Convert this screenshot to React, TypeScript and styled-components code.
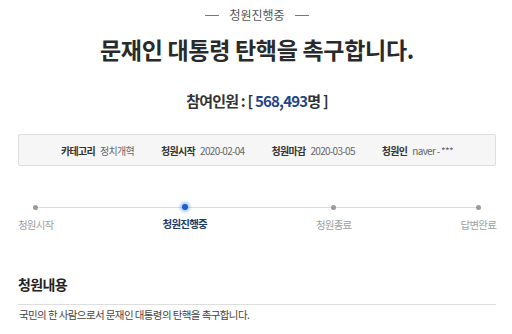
import * as React from 'react';
import styled, { createGlobalStyle } from 'styled-components';

const GlobalStyle = createGlobalStyle`
  html, body {
    margin: 0;
    padding: 0;
    background: #fff;
  }
  body {
    font-family: "Noto Sans CJK KR", "Noto Sans", sans-serif;
    color: #333;
  }
`;

const Page = styled.div`
  width: 512px;
  padding: 0 16px 0 18px;
  box-sizing: border-box;
`;

const Status = styled.div`
  display: flex;
  align-items: center;
  justify-content: center;
  gap: 10px;
  margin-top: 6px;
  font-size: 12px;
  line-height: 18px;
  color: #555;

  &::before,
  &::after {
    content: '';
    width: 14px;
    height: 1px;
    background: #777;
  }
`;

const Title = styled.h1`
  margin: 10px 0 0;
  text-align: center;
  font-size: 23px;
  line-height: 30px;
  font-weight: 700;
  letter-spacing: -0.3px;
  color: #2a2a2a;
`;

const Count = styled.div`
  margin-top: 27px;
  text-align: center;
  font-size: 15px;
  line-height: 20px;
  font-weight: 700;
  letter-spacing: -0.8px;
  color: #333;
`;

const CountNumber = styled.span`
  color: #1d468a;
`;

const InfoBox = styled.div`
  margin-top: 23px;
  height: 32px;
  display: flex;
  align-items: center;
  justify-content: center;
  gap: 27px;
  background: #f6f6f6;
  border: 1px solid #dedede;
  border-radius: 2px;
  box-sizing: border-box;
`;

const InfoItem = styled.div`
  display: flex;
  align-items: center;
  gap: 5px;
  font-size: 10px;
  letter-spacing: -0.7px;
`;

const InfoLabel = styled.span`
  font-weight: 700;
  color: #333;
`;

const InfoValue = styled.span`
  color: #666;
`;

const Steps = styled.div`
  position: relative;
  margin-top: 33px;
  display: flex;
  justify-content: space-between;

  &::before {
    content: '';
    position: absolute;
    left: 16px;
    right: 16px;
    top: 8px;
    height: 1px;
    background: #dcdcdc;
  }
`;

const Step = styled.div`
  position: relative;
  display: flex;
  flex-direction: column;
  align-items: center;
  gap: 7px;
`;

const Dot = styled.span<{ $active?: boolean }>`
  margin-top: ${(p) => (p.$active ? '5px' : '6px')};
  width: ${(p) => (p.$active ? '6px' : '5px')};
  height: ${(p) => (p.$active ? '6px' : '5px')};
  border-radius: 50%;
  background: ${(p) => (p.$active ? '#1a5fc8' : '#9a9a9a')};
  box-shadow: ${(p) => (p.$active ? '0 0 3px 2px rgba(60, 130, 230, 0.45)' : 'none')};
  margin-bottom: ${(p) => (p.$active ? '0' : '1px')};
`;

const StepLabel = styled.span<{ $active?: boolean }>`
  font-size: 10.5px;
  line-height: 14px;
  letter-spacing: -0.8px;
  font-weight: ${(p) => (p.$active ? 700 : 400)};
  color: ${(p) => (p.$active ? '#1f3a66' : '#a0a0a0')};
`;

const Section = styled.section`
  margin-top: 42px;
`;

const SectionTitle = styled.h2`
  margin: 0;
  padding-bottom: 10px;
  border-bottom: 1px solid #dedede;
  font-size: 14px;
  line-height: 20px;
  font-weight: 700;
  letter-spacing: -0.6px;
  color: #222;
`;

const SectionBody = styled.p`
  margin: 2px 0 0 1px;
  font-size: 10.5px;
  line-height: 16px;
  letter-spacing: -0.6px;
  color: #444;
`;

const info = [
  { label: '카테고리', value: '정치개혁' },
  { label: '청원시작', value: '2020-02-04' },
  { label: '청원마감', value: '2020-03-05' },
  { label: '청원인', value: 'naver - ***' },
];

const steps = ['청원시작', '청원진행중', '청원종료', '답변완료'];
const activeStep = 1;

export default function App() {
  return (
    <>
      <GlobalStyle />
      <Page>
        <Status>청원진행중</Status>
        <Title>문재인 대통령 탄핵을 촉구합니다.</Title>
        <Count>
          참여인원 : [ <CountNumber>568,493</CountNumber>명 ]
        </Count>
        <InfoBox>
          {info.map((item) => (
            <InfoItem key={item.label}>
              <InfoLabel>{item.label}</InfoLabel>
              <InfoValue>{item.value}</InfoValue>
            </InfoItem>
          ))}
        </InfoBox>
        <Steps>
          {steps.map((s, i) => (
            <Step key={s}>
              <Dot $active={i === activeStep} />
              <StepLabel $active={i === activeStep}>{s}</StepLabel>
            </Step>
          ))}
        </Steps>
        <Section>
          <SectionTitle>청원내용</SectionTitle>
          <SectionBody>국민의 한 사람으로서 문재인 대통령의 탄핵을 촉구합니다.</SectionBody>
        </Section>
      </Page>
    </>
  );
}
